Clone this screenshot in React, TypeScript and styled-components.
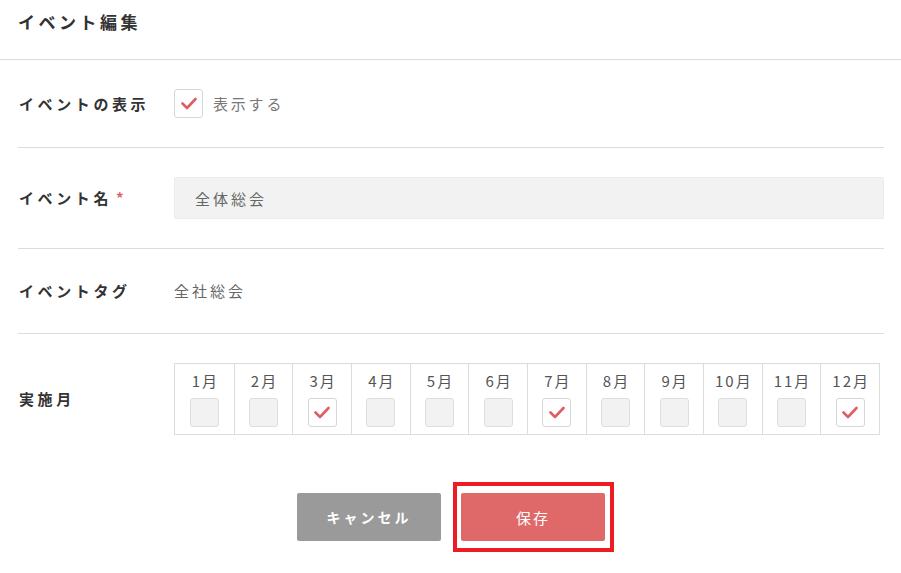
import React from 'react';
import styled, { createGlobalStyle } from 'styled-components';

const GlobalStyle = createGlobalStyle`
  body {
    margin: 0;
    background: #fff;
    font-family: "Noto Sans CJK JP", "Noto Sans", sans-serif;
    color: #333;
  }
`;

const Page = styled.div`
  width: 901px;
  min-height: 573px;
  background: #fff;
`;

const Header = styled.div`
  height: 59px;
  border-bottom: 1px solid #dcdcdc;
  padding: 0 18px;
  display: flex;
  align-items: flex-start;
`;

const Title = styled.h1`
  margin: 9px 0 0;
  font-size: 17px;
  line-height: 26px;
  font-weight: 700;
  letter-spacing: 3.5px;
  color: #333;
`;

const Form = styled.div`
  padding: 0 17px 0 18px;
`;

const Row = styled.div<{ $last?: boolean }>`
  display: flex;
  align-items: center;
  padding: 29px 0;
  border-bottom: ${(p) => (p.$last ? 'none' : '1px solid #dcdcdc')};
`;

const Label = styled.div`
  width: 156px;
  box-sizing: border-box;
  flex-shrink: 0;
  padding-left: 1px;
  font-size: 15px;
  font-weight: 700;
  letter-spacing: 3.6px;
  color: #333;
  line-height: 26px;
`;

const Required = styled.span`
  color: #e06666;
  margin-left: 4px;
`;

const Field = styled.div`
  flex: 1;
  display: flex;
  align-items: center;
`;

const Box = styled.span<{ $checked?: boolean }>`
  width: 29px;
  height: 29px;
  box-sizing: border-box;
  border: 1px solid ${(p) => (p.$checked ? '#d6d6d6' : '#dedede')};
  border-radius: 3px;
  background: ${(p) => (p.$checked ? '#fff' : '#f2f2f2')};
  display: inline-flex;
  align-items: center;
  justify-content: center;
`;

const CheckLabel = styled.span`
  margin-left: 10px;
  font-size: 15px;
  letter-spacing: 2.8px;
  color: #777;
  line-height: 26px;
`;

const Input = styled.div`
  flex: 1;
  height: 42px;
  box-sizing: border-box;
  background: #f2f2f2;
  border: 1px solid #ececec;
  border-radius: 2px;
  display: flex;
  align-items: center;
  padding-left: 20px;
  font-size: 15px;
  letter-spacing: 3px;
  color: #666;
`;

const Value = styled.span`
  font-size: 15px;
  letter-spacing: 3px;
  color: #666;
  line-height: 26px;
`;

const MonthTable = styled.div`
  width: 706px;
  display: grid;
  grid-template-columns: repeat(12, 1fr);
  border: 1px solid #dcdcdc;
  box-sizing: border-box;
`;

const MonthCell = styled.div`
  display: flex;
  flex-direction: column;
  align-items: center;
  padding: 5px 0 7px;
  border-left: 1px solid #dcdcdc;
  &:first-child {
    border-left: none;
  }
`;

const MonthName = styled.span`
  font-size: 15px;
  letter-spacing: 2px;
  color: #555;
  line-height: 24px;
  margin-bottom: 5px;
  padding-left: 2px;
`;

const Actions = styled.div`
  display: flex;
  justify-content: center;
  gap: 20px;
  padding: 29px 0 0;
`;

const Button = styled.button<{ $variant: 'cancel' | 'save' }>`
  position: relative;
  width: 144px;
  height: 48px;
  border: none;
  border-radius: 2px;
  background: ${(p) => (p.$variant === 'save' ? '#df6868' : '#9a9a9a')};
  color: #fff;
  font-family: "Noto Sans CJK JP", "Noto Sans", sans-serif;
  font-size: ${(p) => (p.$variant === 'save' ? '15px' : '14px')};
  font-weight: ${(p) => (p.$variant === 'save' ? 400 : 700)};
  letter-spacing: ${(p) => (p.$variant === 'save' ? '2px' : '3px')};
  cursor: pointer;
`;

const Highlight = styled.span`
  position: absolute;
  top: -11px;
  bottom: -11px;
  left: -8px;
  right: -9px;
  border: 4px solid #ed1c24;
  pointer-events: none;
`;

const Check = () => (
  <svg width="16" height="13" viewBox="0 0 16 13">
    <path d="M1.5 6.5 L6 11 L14.5 2" fill="none" stroke="#dd5f63" strokeWidth="2.6" strokeLinecap="round" strokeLinejoin="round" />
  </svg>
);

const months = [1, 2, 3, 4, 5, 6, 7, 8, 9, 10, 11, 12];
const checkedMonths = [3, 7, 12];

const App = () => {
  return (
    <Page>
      <GlobalStyle />
      <Header>
        <Title>イベント編集</Title>
      </Header>
      <Form>
        <Row>
          <Label>イベントの表示</Label>
          <Field>
            <Box $checked>
              <Check />
            </Box>
            <CheckLabel>表示する</CheckLabel>
          </Field>
        </Row>
        <Row>
          <Label>
            イベント名<Required>*</Required>
          </Label>
          <Input>全体総会</Input>
        </Row>
        <Row>
          <Label>イベントタグ</Label>
          <Value>全社総会</Value>
        </Row>
        <Row $last>
          <Label>実施月</Label>
          <MonthTable>
            {months.map((m) => {
              const checked = checkedMonths.includes(m);
              return (
                <MonthCell key={m}>
                  <MonthName>{m}月</MonthName>
                  <Box $checked={checked}>{checked && <Check />}</Box>
                </MonthCell>
              );
            })}
          </MonthTable>
        </Row>
        <Actions>
          <Button $variant="cancel">キャンセル</Button>
          <Button $variant="save">
            保存
            <Highlight />
          </Button>
        </Actions>
      </Form>
    </Page>
  );
};

export default App;
